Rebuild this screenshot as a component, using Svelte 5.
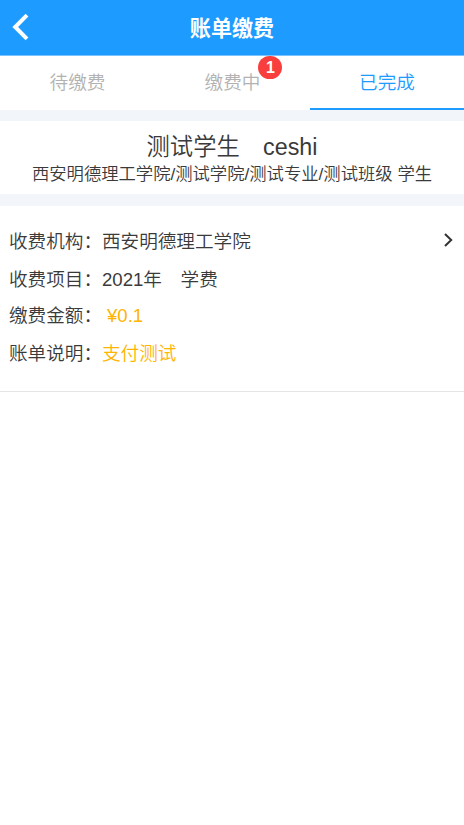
<script>
  let activeTab = 'done';

  const tabs = [
    { key: 'todo', label: '待缴费', badge: 0 },
    { key: 'doing', label: '缴费中', badge: 1 },
    { key: 'done', label: '已完成', badge: 0 }
  ];

  const student = {
    name: '测试学生',
    account: 'ceshi',
    detail: '西安明德理工学院/测试学院/测试专业/测试班级 学生'
  };

  const bills = [
    {
      org: '西安明德理工学院',
      item: '2021年\u3000学费',
      amount: '¥0.1',
      remark: '支付测试'
    }
  ];
</script>

<div class="page">
  <header class="navbar">
    <button class="back" aria-label="返回">
      <svg width="18" height="28" viewBox="0 0 18 28">
        <path d="M16 2.2L4.2 14L16 25.8" fill="none" stroke="#fff" stroke-width="4" />
      </svg>
    </button>
    <h1>账单缴费</h1>
  </header>

  <nav class="tabs">
    {#each tabs as tab}
      <button class="tab" class:active={activeTab === tab.key} on:click={() => (activeTab = tab.key)}>
        <span class="tab-label">
          {tab.label}
          {#if tab.badge}
            <span class="badge">{tab.badge}</span>
          {/if}
        </span>
      </button>
    {/each}
  </nav>

  <section class="student">
    <div class="student-name">{student.name}&#12288;{student.account}</div>
    <div class="student-detail">{student.detail}</div>
  </section>

  {#each bills as bill}
    <section class="bill">
      <dl>
        <div class="row"><dt>收费机构：</dt><dd>{bill.org}</dd></div>
        <div class="row item"><dt>收费项目：</dt><dd>{bill.item}</dd></div>
        <div class="row amount"><dt>缴费金额：</dt><dd>{bill.amount}</dd></div>
        <div class="row remark"><dt>账单说明：</dt><dd>{bill.remark}</dd></div>
      </dl>
      <svg class="arrow" width="10" height="16" viewBox="0 0 10 16">
        <path d="M2 2L8.2 8L2 14" fill="none" stroke="#333" stroke-width="2" />
      </svg>
    </section>
  {/each}
</div>

<style>
  :global(body) {
    margin: 0;
    background: #fff;
  }

  .page {
    font-family: 'Liberation Sans', 'Noto Sans CJK SC', sans-serif;
    font-weight: 350;
    font-size: 18.6px;
    color: #3a3a3a;
  }

  button {
    padding: 0;
    border: 0;
    background: none;
    font: inherit;
    cursor: pointer;
  }

  .navbar {
    display: grid;
    grid-template-columns: 60px 1fr 60px;
    align-items: center;
    height: 55px;
    border-bottom: 1px solid #77c2ff;
    background: #1e9bff;
    color: #fff;
  }

  .back {
    display: flex;
    padding: 0 0 1px 11px;
  }

  h1 {
    margin: 3px 0 0;
    font-size: 21.1px;
    font-weight: 700;
    line-height: 30px;
    text-align: center;
  }

  .tabs {
    display: grid;
    grid-template-columns: 155px 155px 1fr;
    height: 54px;
  }

  .tab {
    height: 53.5px;
    box-sizing: border-box;
    border-bottom: 2px solid transparent;
    color: #b2b2b2;
    line-height: 54px;
  }

  .tab.active {
    border-color: #1e9bff;
    color: #1e9bff;
  }

  .tab-label {
    position: relative;
  }

  .badge {
    position: absolute;
    top: -16px;
    right: -22px;
    width: 24px;
    height: 23px;
    border-radius: 12px;
    background: #f93e3e;
    color: #fff;
    font-size: 16px;
    font-weight: 700;
    line-height: 24px;
    text-align: center;
  }

  .student {
    height: 73px;
    padding-top: 12px;
    box-sizing: border-box;
    box-shadow: 0 -11px 0 #f2f6fb, 0 12px 0 #f2f6fb;
    margin: 11px 0 13px;
    text-align: center;
  }

  .student-name {
    font-size: 23.3px;
    line-height: 28px;
  }

  .student-detail {
    font-size: 17.32px;
    line-height: 26px;
    white-space: nowrap;
  }

  .bill {
    display: flex;
    justify-content: space-between;
    height: 185px;
    padding: 16px 11.5px 0 9px;
    box-sizing: border-box;
    border-bottom: 1px solid #e5e5e5;
  }

  dl,
  dd {
    margin: 0;
  }

  .row {
    display: flex;
    height: 37px;
    line-height: 37px;
  }

  .row.item {
    padding-top: 1px;
    height: 36px;
  }

  .amount dd,
  .remark dd {
    color: #ffb400;
  }

  .amount dd {
    padding-left: 5px;
  }

  .row.remark {
    padding-top: 1px;
  }

  .arrow {
    margin-top: 9px;
  }
</style>
